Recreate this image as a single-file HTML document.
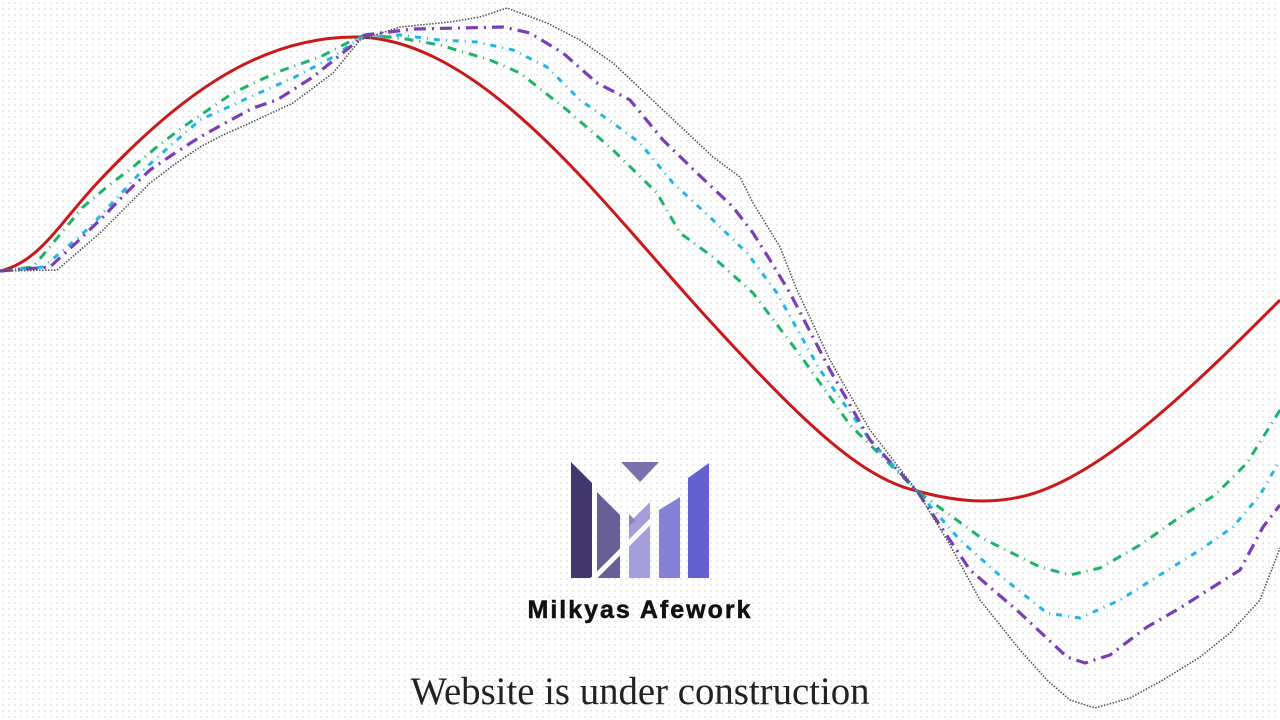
<!DOCTYPE html>
<html><head><meta charset="utf-8"><style>
html,body{margin:0;padding:0;width:1280px;height:720px;overflow:hidden;background:#fefefe;
background-image:radial-gradient(circle,#d8d8d8 0.7px,transparent 0.9px);background-size:6px 6px;}
svg{position:absolute;left:0;top:0}
polyline{stroke-linejoin:round;fill:none}
.name{position:absolute;left:0;width:1280px;top:596px;text-align:center;font:bold 25px "Liberation Sans",sans-serif;letter-spacing:2px;color:#111;-webkit-text-stroke:0.5px #111}
.sub{position:absolute;left:0;width:1280px;top:669px;text-align:center;font:38.8px "Liberation Serif",serif;color:#222}
</style></head><body>
<svg width="1280" height="720" viewBox="0 0 1280 720" fill="none">
<path d="M0,271 C40,262 60,222 100,180 C180,95 260,37 355,37 C480,37 600,200 700,310 C800,420 860,478 917,491 C950,500 985,505 1020,497 C1100,480 1200,380 1280,300" stroke="#c8191b" stroke-width="3"/>
<polyline points="0,271 33,267 58,237 83,207 108,186 133,167 158,146 183,127 208,110 233,93 258,81 283,70 320,57 353,40 365,35 400,38 440,45 490,60 520,73 567,110 613,150 657,193 680,233 713,257 753,293 800,355 850,425 917,491 980,537 1040,567 1070,575 1100,568 1140,545 1180,517 1215,495 1247,463 1280,410" stroke="#1fb36a" stroke-width="3" stroke-dasharray="9 6 1 6"/>
<polyline points="0,271 43,267 66,248 90,227 115,200 140,173 170,146 200,120 250,97 293,78 333,57 360,38 400,35 440,40 477,42 513,50 547,67 580,100 613,123 640,143 673,183 713,220 747,253 777,293 820,370 870,440 917,491 960,540 997,573 1047,613 1080,618 1120,600 1163,573 1200,550 1233,527 1260,495 1280,460" stroke="#22b6e4" stroke-width="3" stroke-dasharray="6 6 1 6"/>
<polyline points="0,271 50,267 76,243 103,217 126,193 150,170 175,153 200,137 227,122 253,108 277,100 313,77 350,47 365,35 413,29 460,28 503,27 530,33 563,53 597,83 630,100 663,140 697,173 733,207 753,233 770,260 790,293 830,370 870,440 917,491 970,570 1020,613 1067,657 1085,663 1110,655 1147,627 1180,608 1213,587 1240,570 1263,527 1280,505" stroke="#7a3fb5" stroke-width="3.2" stroke-dasharray="12 6 2 6"/>
<polyline points="0,271 57,270 78,252 100,233 125,208 150,183 175,164 200,147 225,134 250,123 293,103 333,73 360,40 400,27 450,22 480,17 507,8 547,23 580,40 613,63 663,110 713,157 740,177 753,203 780,247 797,290 830,360 870,430 917,491 950,545 980,600 1020,650 1047,680 1070,700 1095,708 1130,698 1163,680 1200,657 1230,633 1260,600 1280,548" stroke="#555" stroke-width="1.6" stroke-dasharray="1.5 1.5"/>
<!-- logo -->
<polygon points="571,462 592,483 592,578 571,578" fill="#41366e"/>
<polygon points="597,492 620,515 620,578 597,578" fill="#6a5e96"/>
<polygon points="621,462 659,462 640,482" fill="#7c70ad"/>
<polygon points="629,523 650,502 650,578 629,578" fill="#a49fdc"/>
<polygon points="659,510 680,497 680,578 659,578" fill="#8680d6"/>
<polygon points="688,478 709,463 709,578 688,578" fill="#6460cf"/>
<polygon points="629,514 636,521 629,526" fill="#8c86b8"/>
<line x1="592" y1="580" x2="652" y2="520" stroke="#fefefe" stroke-width="5"/>
</svg>
<div class="name">Milkyas Afework</div>
<div class="sub">Website is under construction</div>
</body></html>
